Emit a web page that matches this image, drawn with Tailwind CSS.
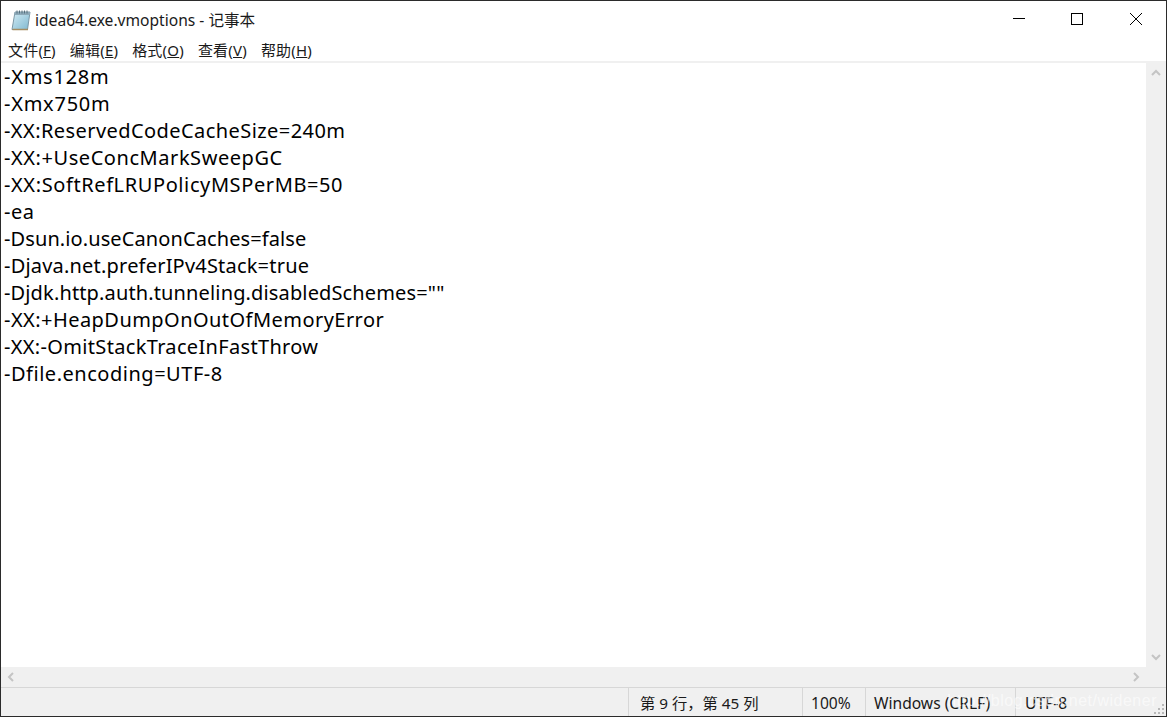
<!DOCTYPE html>
<html>
  <head>
    <meta charset="UTF-8" />
    <title>idea64.exe.vmoptions - 记事本</title>
    <script src="https://cdn.jsdelivr.net/npm/@tailwindcss/browser@4"></script>
  </head>
  <body class="bg-white">
    <div class="relative w-[1167px] h-[717px] flex flex-col overflow-hidden border border-[#2b2b2b] bg-white text-black font-['Noto_Sans','Noto_Sans_CJK_SC',sans-serif]">
      <!-- title bar -->
      <div class="h-[37px] flex items-center shrink-0">
        <svg class="w-[20px] h-[22px] ml-[10px]" viewBox="0 0 20 22">
          <defs>
            <linearGradient id="pad" x1="0" y1="0" x2="1" y2="1">
              <stop offset="0" stop-color="#d3ecf5" />
              <stop offset="1" stop-color="#7fb8d0" />
            </linearGradient>
          </defs>
          <path d="M4 3h15l-2.5 17.5H1z" fill="url(#pad)" stroke="#7c98a6" stroke-width="1" />
          <path d="M1.5 20.5h15.5" stroke="#a58d62" stroke-width="1.5" />
          <path d="M4 3h15l-.5 3H3.500z" fill="#8da9b8" />
          <path d="M6 1.500v3M8.500 1.500v3M11 1.500v3M13.500 1.500v3M16 1.500v3" stroke="#56707e" stroke-width="1" />
        </svg>
        <span class="ml-[4px] text-[15.6px] leading-5 text-[#1a1a1a]">idea64.exe.vmoptions - 记事本</span>
        <div class="ml-auto flex items-center h-full pb-[1px]">
          <button class="w-[58px] h-full flex items-center justify-center">
            <svg class="w-3 h-3" viewBox="0 0 12 12"><path d="M0 5.500h12" stroke="#000" stroke-width="1" /></svg>
          </button>
          <button class="w-[58px] h-full flex items-center justify-center">
            <svg class="w-3 h-3" viewBox="0 0 12 12"><rect x="0.5" y="0.5" width="11" height="11" fill="none" stroke="#000" stroke-width="1" /></svg>
          </button>
          <button class="w-[60px] h-full flex items-center justify-center">
            <svg class="w-3 h-3" viewBox="0 0 12 12"><path d="M0 0l12 12M12 0L0 12" stroke="#000" stroke-width="1" /></svg>
          </button>
        </div>
      </div>

      <!-- menu bar -->
      <div class="h-[23px] flex items-center gap-[14px] pl-[7px] text-[15px] tracking-[0.2px] leading-5 shrink-0 text-[#1a1a1a]">
        <span>文件(<u>F</u>)</span>
        <span>编辑(<u>E</u>)</span>
        <span>格式(<u>O</u>)</span>
        <span>查看(<u>V</u>)</span>
        <span>帮助(<u>H</u>)</span>
      </div>
      <div class="h-[2px] bg-[#f0f0f0] shrink-0"></div>

      <!-- editor -->
      <div class="flex flex-1 min-h-0">
        <div class="flex-1 pl-[3px] text-[20px] leading-[27px] whitespace-nowrap text-black">
          <div class="tracking-[0.75px]">-Xms128m</div>
          <div class="tracking-[0.75px]">-Xmx750m</div>
          <div class="tracking-[0.43px]">-XX:ReservedCodeCacheSize=240m</div>
          <div class="tracking-[0.56px]">-XX:+UseConcMarkSweepGC</div>
          <div class="tracking-[0.6px]">-XX:SoftRefLRUPolicyMSPerMB=50</div>
          <div class="tracking-[0.5px]">-ea</div>
          <div class="tracking-[0.1px]">-Dsun.io.useCanonCaches=false</div>
          <div class="tracking-[0.2px]">-Djava.net.preferIPv4Stack=true</div>
          <div class="tracking-[0.14px]">-Djdk.http.auth.tunneling.disabledSchemes=""</div>
          <div class="tracking-[0.45px]">-XX:+HeapDumpOnOutOfMemoryError</div>
          <div class="tracking-[0.33px]">-XX:-OmitStackTraceInFastThrow</div>
          <div class="tracking-[0.52px]">-Dfile.encoding=UTF-8</div>
        </div>
        <div class="w-[20px] bg-[#f0f0f0] flex flex-col items-center pt-[6px]">
          <svg class="w-[10px] h-[8px]" viewBox="0 0 10 8"><path d="M1 6l4-4 4 4" fill="none" stroke="#c4c4c4" stroke-width="2" /></svg>
          <svg class="w-[10px] h-[8px] mt-auto mb-[6px]" viewBox="0 0 10 8"><path d="M1 2l4 4 4-4" fill="none" stroke="#c4c4c4" stroke-width="2" /></svg>
        </div>
      </div>

      <!-- horizontal scrollbar -->
      <div class="h-[20px] bg-[#f0f0f0] flex items-center justify-between pl-[6px] pr-[26px] shrink-0">
        <svg class="w-[8px] h-[10px]" viewBox="0 0 8 10"><path d="M6 1L2 5l4 4" fill="none" stroke="#c4c4c4" stroke-width="2" /></svg>
        <svg class="w-[8px] h-[10px]" viewBox="0 0 8 10"><path d="M2 1l4 4-4 4" fill="none" stroke="#c4c4c4" stroke-width="2" /></svg>
      </div>

      <!-- status bar -->
      <div class="h-[29px] bg-[#f0f0f0] border-t border-[#d7d7d7] flex items-center text-[15.6px] leading-5 text-[#1a1a1a] shrink-0">
        <div class="w-[627px]"></div>
        <div class="w-[174px] h-full border-l border-[#d7d7d7] flex items-center pl-[11px] pt-[2px] text-[15.3px]">第 9 行，第 45 列</div>
        <div class="w-[63px] h-full border-l border-[#d7d7d7] flex items-center pl-[8px] pt-[2px]">100%</div>
        <div class="w-[150px] h-full border-l border-[#d7d7d7] flex items-center pl-[8px] pt-[2px]">Windows (CRLF)</div>
        <div class="flex-1 h-full border-l border-[#d7d7d7] flex items-center pl-[9px] pt-[2px]">UTF-8</div>
      </div>

      <!-- resize grip + watermark -->
      <svg class="absolute right-0 bottom-0 w-[12px] h-[12px]" viewBox="0 0 12 12" fill="#b8b8b8">
        <rect x="8" y="0" width="2" height="2" /><rect x="4" y="4" width="2" height="2" /><rect x="8" y="4" width="2" height="2" />
        <rect x="0" y="8" width="2" height="2" /><rect x="4" y="8" width="2" height="2" /><rect x="8" y="8" width="2" height="2" />
      </svg>
      <span class="absolute right-[9px] bottom-[5px] text-[16px] leading-5 text-white/60 font-['Liberation_Sans',sans-serif] tracking-[0.5px]">http://blog.csdn.net/widener</span>
    </div>
  </body>
</html>
